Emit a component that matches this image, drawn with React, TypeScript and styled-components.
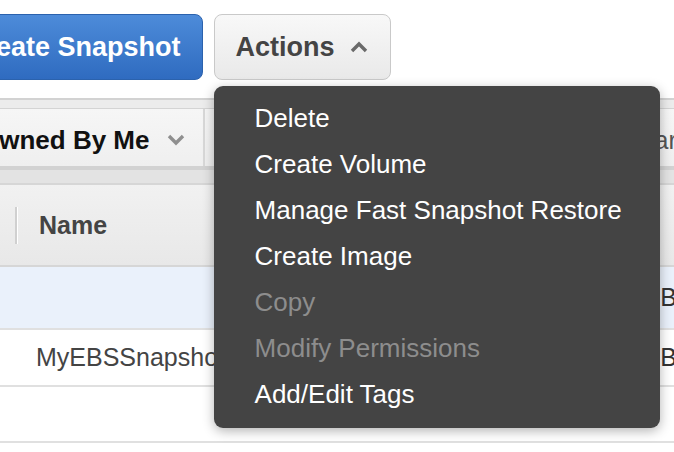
import React from "react";
import styled, { createGlobalStyle } from "styled-components";

const GlobalStyle = createGlobalStyle`
  html, body {
    margin: 0;
    padding: 0;
    background: #fff;
    overflow: hidden;
  }
  body {
    font-family: "Liberation Sans", Arial, Helvetica, sans-serif;
    width: 674px;
    height: 452px;
  }
`;

const Page = styled.div`
  width: 674px;
  height: 452px;
  overflow: hidden;
  position: relative;
  background: #fff;
`;

const Toolbar = styled.div`
  display: flex;
  align-items: stretch;
  gap: 11px;
  height: 66px;
  padding-top: 14px;
  margin-left: -56px;
  margin-bottom: 18px;
`;

const PrimaryButton = styled.button`
  height: 66px;
  padding: 0 21px;
  border: 1px solid #2b62ad;
  border-radius: 8px;
  background: linear-gradient(#4d8bd9, #2f6bc0);
  color: #fff;
  font-family: inherit;
  font-weight: 700;
  font-size: 27px;
  white-space: nowrap;
`;

const DropdownWrap = styled.div`
  position: relative;
`;

const ActionsButton = styled.button`
  height: 66px;
  width: 177px;
  padding: 0 0 0 21px;
  display: flex;
  align-items: center;
  gap: 14px;
  border: 1px solid #c9c9c9;
  border-radius: 8px;
  background: linear-gradient(#f8f8f8, #e9e9e9);
  color: #444;
  font-family: inherit;
  font-weight: 700;
  font-size: 27px;
`;

const Menu = styled.ul`
  position: absolute;
  top: calc(100% + 6px);
  left: 0;
  width: 446px;
  margin: 0;
  padding: 9px 0 11px;
  list-style: none;
  background: #444;
  border-radius: 9px;
  box-shadow: 0 3px 12px rgba(0, 0, 0, 0.3);
  z-index: 10;
`;

const MenuItem = styled.li<{ $disabled?: boolean }>`
  height: 46px;
  display: flex;
  align-items: center;
  padding-left: 41px;
  font-size: 26px;
  color: ${(p) => (p.$disabled ? "#8d8d8d" : "#fff")};
  white-space: nowrap;
`;

const Band = styled.div<{ $h: number; $bg: string }>`
  height: ${(p) => p.$h}px;
  background: ${(p) => p.$bg};
  border-top: 2px solid #d2d2d2;
  box-sizing: border-box;
`;

const FilterBar = styled.div`
  height: 60px;
  display: flex;
  align-items: stretch;
  background: linear-gradient(#f6f6f6, #efefef);
  border-top: 1px solid #d4d4d4;
  border-bottom: 2px solid #d2d2d2;
  box-sizing: border-box;
`;

const FilterSelect = styled.div`
  width: 226px;
  box-sizing: border-box;
  display: flex;
  align-items: center;
  gap: 17px;
  margin-left: -21px;
  padding-top: 5px;
  border-right: 2px solid #d8d8d8;
  font-weight: 700;
  font-size: 26px;
  color: #111;
  white-space: nowrap;
  overflow: hidden;
`;

const FilterInput = styled.div`
  flex: 1;
  display: flex;
  align-items: center;
  padding-left: 419px;
  padding-top: 5px;
  font-size: 25px;
  color: #555;
  white-space: nowrap;
  overflow: hidden;
`;

const HeaderRow = styled.div`
  height: 84px;
  display: flex;
  align-items: center;
  background: linear-gradient(#f1f1f1, #e8e8e8);
  border-top: 2px solid #d6d6d6;
  border-bottom: 2px solid #d6d6d6;
  box-sizing: border-box;
`;

const ColDivider = styled.span`
  width: 2px;
  height: 37px;
  margin-left: 15px;
  background: #d0d0d0;
  border-right: 1px solid #fff;
`;

const HeaderCell = styled.span`
  margin-left: 21px;
  font-weight: 700;
  font-size: 25px;
  color: #444;
`;

const Row = styled.div<{ $selected?: boolean; $h: number }>`
  height: ${(p) => p.$h}px;
  display: flex;
  align-items: center;
  justify-content: space-between;
  background: ${(p) => (p.$selected ? "#eaf1fb" : "#fff")};
  border-bottom: 2px solid #e0e0e0;
  box-sizing: border-box;
  font-size: 25px;
  white-space: nowrap;
`;

const NameCell = styled.span`
  padding-left: 36px;
  color: #444;
`;

const SizeCell = styled.span`
  margin-right: -3px;
  color: #333;
`;

const Chevron = ({ up }: { up?: boolean }) => (
  <svg width="20" height="12" viewBox="0 0 20 12">
    <polyline
      points={up ? "3,10 10,3 17,10" : "3,2 10,9 17,2"}
      fill="none"
      stroke={up ? "#6a6a6a" : "#8f8f8f"}
      strokeWidth="3.4"
    />
  </svg>
);

const menuItems = [
  { label: "Delete" },
  { label: "Create Volume" },
  { label: "Manage Fast Snapshot Restore" },
  { label: "Create Image" },
  { label: "Copy", disabled: true },
  { label: "Modify Permissions", disabled: true },
  { label: "Add/Edit Tags" },
];

const App = () => {
  return (
    <Page>
      <GlobalStyle />
      <Toolbar>
        <PrimaryButton>Create Snapshot</PrimaryButton>
        <DropdownWrap>
          <ActionsButton>
            Actions
            <Chevron up />
          </ActionsButton>
          <Menu>
            {menuItems.map((m) => (
              <MenuItem key={m.label} $disabled={m.disabled}>
                {m.label}
              </MenuItem>
            ))}
          </Menu>
        </DropdownWrap>
      </Toolbar>
      <Band $h={10} $bg="#ececec" />
      <FilterBar>
        <FilterSelect>
          Owned By Me
          <Chevron />
        </FilterSelect>
        <FilterInput>Search</FilterInput>
      </FilterBar>
      <Band $h={15} $bg="#e3e3e3" />
      <HeaderRow>
        <ColDivider />
        <HeaderCell>Name</HeaderCell>
      </HeaderRow>
      <Row $selected $h={63}>
        <NameCell />
        <SizeCell>8 GiB</SizeCell>
      </Row>
      <Row $h={57}>
        <NameCell>MyEBSSnapshot</NameCell>
        <SizeCell>8 GiB</SizeCell>
      </Row>
      <Row $h={56}>
        <NameCell />
      </Row>
    </Page>
  );
};

export default App;
